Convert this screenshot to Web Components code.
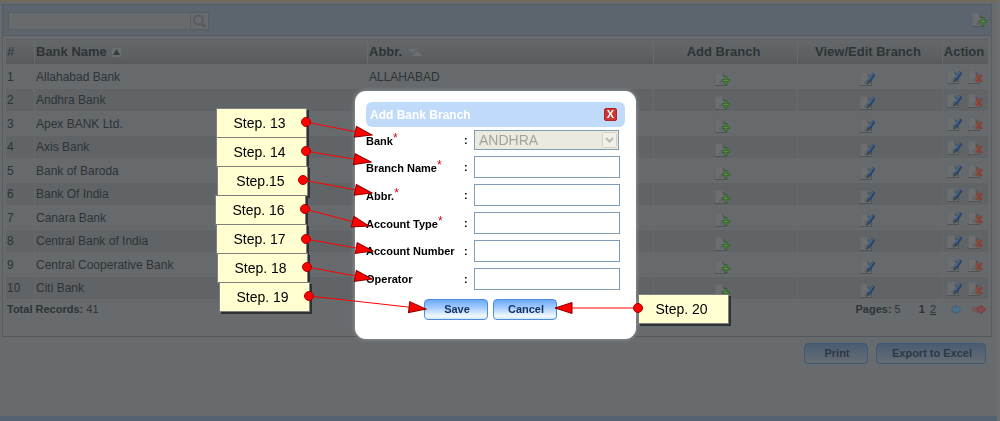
<!DOCTYPE html>
<html lang="en">
<head>
<meta charset="utf-8">
<title>Bank Branches</title>
<style>
html, body { margin: 0; height: 100%; }
body { font-family: "Liberation Sans", Arial, sans-serif; font-size: 12px; background: #676b6e; color: #2e3336; overflow: hidden; }
</style>
</head>
<body>
<bank-page></bank-page>
<modal-layer>
  <branch-dialog></branch-dialog>
</modal-layer>

<script>
const make = (name, html, setup) => {
  const t = document.createElement('template');
  t.innerHTML = html;
  customElements.define(name, class extends HTMLElement {
    connectedCallback() {
      if (this.shadowRoot) return;
      this.attachShadow({ mode: 'open' }).append(t.content.cloneNode(true));
      if (setup) setup.call(this, this.shadowRoot);
    }
  });
};

const doc = '<path d="M1 1h7l3 4v8H1z" fill="#6b6f72"/><path d="M.5 13V.5H8" fill="none" stroke="#64686b"/><path d="M0 13.500h12M11.500 13V5" fill="none" stroke="#505456"/><path d="M7 1l5 4H8z" fill="#54585b"/><path d="M4 10l3-3 4 2v3H4z" fill="#626669"/>';
const shapes = {
  add: doc + '<path d="M11 4v9M7 8.500h8" stroke="#38622f" stroke-width="3"/><path d="M11 5v7M8 8.500h6" stroke="#5a8a40"/>',
  edit: doc + '<path d="M8.500 10L14 2" stroke="#2c4468" stroke-width="3.500"/><path d="M8.500 8.500L13 2" stroke="#4a7fa3"/><path d="M6 13l1-4 3 2z" fill="#3f464c"/>',
  del: doc + '<path d="M8 5l6 7M14 5l-6 7" stroke="#8a4237" stroke-width="2.500"/>',
  search: '<circle cx="6.500" cy="6" r="4.500" fill="none" stroke="#585c5f" stroke-width="2"/><path d="M9.500 9.500l3.500 3.500" stroke="#585c5f" stroke-width="3"/>',
  next: '<path d="M3 5h4V3l5 4.500-5 4.500v-2H3z" fill="#4a7189" stroke="#3e5f7b"/>',
  last: '<path d="M1 5v5M3 5v5" stroke="#83494b"/><path d="M5 5h4V3l5 4.500-5 4.500v-2H5z" fill="#84494b" stroke="#743f41"/>'
};
make('ui-icon', `<style>:host{display:inline-block;width:15px;height:15px;vertical-align:top}svg{display:block}</style><svg width="15" height="15" viewBox="0 0 15 15"></svg>`,
  function (r) { r.querySelector('svg').innerHTML = shapes[this.getAttribute('kind')]; });

make('glass-button', `<style>
:host{display:inline-block}
button{box-sizing:border-box;width:100%;height:21px;padding:0 2px 0 4px;margin:0;display:block;white-space:nowrap;font:bold 11px/19px "Liberation Sans",Arial,sans-serif;color:#14305e;border:1px solid #4a8edb;border-radius:4px;background:linear-gradient(#69aafb,#a3cbfd 40%,#f4f9ff 85%,#d5e8ff)}
:host([dim]) button{color:#2c3846;border-color:#3d5a78;background:linear-gradient(#485c71,#566474 45%,#666b71)}
</style><button type="button"><slot></slot></button>`);

make('search-box', `<style>
:host{display:flex;width:201px;height:18px}
input{box-sizing:border-box;flex:1;min-width:0;margin:0;padding:0 3px;border:1px solid #595d60;background:#676b6e;color:#2e3336;font:12px "Liberation Sans",Arial,sans-serif}
button{box-sizing:border-box;width:18px;padding:1px;border:1px solid #595d60;border-left:0;background:#676b6e}
</style><input type="text" aria-label="Search banks"><button type="button" aria-label="Search"><ui-icon kind="search"></ui-icon></button>`);

make('bank-table', `<style>
:host{display:block}
table{width:100%;table-layout:fixed;border-collapse:separate;border-spacing:1px}
th,td{padding:0 1px;text-align:left;font-weight:normal;overflow:hidden;white-space:nowrap}
th{height:24px;font:bold 13px/24px "Liberation Sans",Arial,sans-serif;background:linear-gradient(#63676a,#5c6062 75%,#57595b);border-top:1px solid #5c6063}
th:first-child{font-weight:normal}
td{height:23px;line-height:22px;background:#666a6d}
tr:nth-child(even) td{height:22px;background:#606467}
th.c{text-align:center;padding-right:5px}
th.c:last-child{padding:0 3px 0 0}
td ui-icon{margin:6px auto 0;display:block}
td.i{padding-right:7px}
.act div{display:flex;gap:6px;padding-right:2px;justify-content:center}
.act ui-icon{margin:2px 0 0}
th svg{margin-left:5px;vertical-align:-1px}
</style>
<table><colgroup><col style="width:28px"><col><col style="width:285px"><col style="width:143px"><col style="width:144px"><col style="width:45px"></colgroup>
<thead><tr><th scope="col">#</th><th scope="col">Bank Name<svg width="9" height="9"><path d="M0 0h9v9H0z" fill="#6a6e70"/><path d="M1 7l3.500-6L8 7z" fill="#373c3f"/></svg></th><th scope="col">Abbr.<svg width="16" height="9"><path d="M1 1h9L5 5z" fill="#6c7072"/><path d="M5 8l5-5 5 5z" fill="#6c7072"/></svg></th><th class="c" scope="col">Add Branch</th><th class="c" scope="col">View/Edit Branch</th><th class="c" scope="col">Action</th></tr></thead><tbody></tbody></table>`,
function (r) {
  const banks = ['Allahabad Bank', 'Andhra Bank', 'Apex BANK Ltd.', 'Axis Bank', 'Bank of Baroda', 'Bank Of India', 'Canara Bank', 'Central Bank of India', 'Central Cooperative Bank', 'Citi Bank'];
  r.querySelector('tbody').innerHTML = banks.map((b, i) => `<tr><td>${i + 1}</td><td>${b}</td><td>${i ? '' : 'ALLAHABAD'}</td><td class="i"><ui-icon kind="add"></ui-icon></td><td class="i"><ui-icon kind="edit"></ui-icon></td><td class="act"><div><ui-icon kind="edit"></ui-icon><ui-icon kind="del"></ui-icon></div></td></tr>`).join('');
});

make('table-pager', `<style>
:host{display:flex;align-items:center;height:18px;padding:0 4px;font-size:11px}
.p{margin-left:auto}
nav{display:flex;align-items:center;margin-left:18px}
a{color:inherit}
nav a{margin-left:5px}nav .n{margin-left:13px}nav .l{margin-left:8px}
</style><span><b>Total Records:</b> 41</span><span class="p"><b>Pages:</b> 5</span>
<nav aria-label="Pages"><b>1</b><a href="#2">2</a><a class="n" href="#2" aria-label="Next page"><ui-icon kind="next"></ui-icon></a><a class="l" href="#5" aria-label="Last page"><ui-icon kind="last"></ui-icon></a></nav>`);

make('bank-page', `<style>
:host{display:flex;flex-direction:column;min-height:100vh;box-sizing:border-box;border-right:3px solid #6b6f71}
.top{height:1px;background:#79694a}
.panel{margin:3px 5px 0 2px;border:1px solid #595d60;border-bottom-color:#55595c;padding-bottom:18px}
.bar{display:flex;align-items:center;justify-content:space-between;height:30px;padding:0 4px 0 5px;background:#5c646e;border-bottom:1px solid #565b61}
.bar search-box{margin-top:2px}
bank-table{margin:2px 2px 0}
.buttons{display:flex;justify-content:flex-end;gap:8px;margin:6px 11px 0 0}
.print{width:64px}.export{width:110px}
.bottom{height:5px;margin-top:auto;background:#536170}
</style>
<div class="top"></div>
<div class="panel"><div class="bar"><search-box></search-box><ui-icon kind="add"></ui-icon></div><bank-table></bank-table><table-pager></table-pager></div>
<div class="buttons"><glass-button dim class="print">Print</glass-button><glass-button dim class="export">Export to Excel</glass-button></div>
<div class="bottom"></div>`);

make('modal-layer', `<style>:host{position:fixed;inset:0;display:flex;justify-content:center;align-items:flex-start;padding:91px 9px 0 0}</style><slot></slot>`);

make('form-row', `<style>
:host{display:grid;grid-template-columns:98px 10px 146px;align-items:center;color:#000;font-size:11px}
label,.colon{font-weight:bold;white-space:nowrap}
label sup{color:#d00000;font:12px/8px "Liberation Sans",Arial,sans-serif;vertical-align:3px}
input{box-sizing:border-box;width:100%;height:22px;margin:0;padding:0 4px;border:1px solid #7f9db9;background:#fff;font:14px "Liberation Sans",Arial,sans-serif}
.sel{display:grid;height:20px;width:145px}
.sel>*{grid-area:1/1}
select{box-sizing:border-box;width:100%;height:20px;appearance:none;margin:0;padding:0 4px;border:1px solid #7f9db9;border-radius:0;background:#ebeae1;color:#a6a396;opacity:1;font:14px "Liberation Sans",Arial,sans-serif}
svg{justify-self:end;align-self:center;margin-right:2px;pointer-events:none}
</style><label for="f"></label><span class="colon">:</span>`,
function (r) {
  const l = r.querySelector('label');
  l.textContent = this.getAttribute('label');
  if (this.hasAttribute('required')) l.insertAdjacentHTML('beforeend', '<sup>*</sup>');
  const v = this.getAttribute('value');
  r.querySelector('.colon').insertAdjacentHTML('afterend', v
    ? `<div class="sel"><select id="f" disabled><option>${v}</option></select><svg width="15" height="16"><rect x=".5" y=".5" width="14" height="15" rx="1" fill="#f1f0e8" stroke="#d4d2c4"/><path d="M4 6l3.500 3.500L11 6" fill="none" stroke="#bdbbad" stroke-width="2"/></svg></div>`
    : '<input id="f" type="text">');
});

make('step-note', `<style>
:host{position:absolute;box-sizing:border-box;width:91px;height:30px;border:1px solid #808080;background:#ffffd2;color:#000;font-size:14px;line-height:28px;text-align:center;padding-right:4px;box-shadow:2px 2px 0 #2f3234}
</style><slot></slot>`);

make('step-notes', `<style>:host{position:absolute;left:0;top:0}svg{position:absolute;left:0;top:0;overflow:visible;pointer-events:none}</style>
<div></div><svg width="1" height="1"><defs><marker id="h" markerUnits="userSpaceOnUse" markerWidth="20" markerHeight="14" refX="18" refY="7" orient="auto"><path d="M1 1.500L18 7 1 12.500z" fill="#f00" stroke="#8c0000"/></marker></defs></svg>`,
function (r) {
  // note text, note x/y, pin x/y, arrow tip x/y; all measured from the dialog's corner
  const notes = [
    ['Step. 13', -139, 17, -49, 31, 17, 44], ['Step. 14', -139, 46, -49, 60, 16, 71],
    ['Step.15', -138, 75, -52, 89, 17, 102], ['Step. 16', -140, 104, -50, 118, 14, 135],
    ['Step. 17', -139, 133, -49, 148, 18, 160], ['Step. 18', -138, 162, -48, 176, 17, 188],
    ['Step. 19', -136, 191, -46, 205, 71, 218], ['Step. 20', 283, 203, 283, 217, 200, 217]];
  r.querySelector('div').innerHTML = notes.map(n => `<step-note style="left:${n[1]}px;top:${n[2]}px">${n[0]}</step-note>`).join('');
  r.querySelector('svg').insertAdjacentHTML('beforeend', notes.map(n => `<path d="M${n[3]} ${n[4]}L${n[5]} ${n[6]}" stroke="#f00" marker-end="url(#h)"/><circle cx="${n[3]}" cy="${n[4]}" r="4.500" fill="#f00" stroke="#b00000"/>`).join(''));
});

make('branch-dialog', `<style>
:host{position:relative;display:block;box-sizing:border-box;width:281px;padding:11px 11px 19px;border-radius:11px;background:#fff;box-shadow:0 0 4px #a0a3a5}
header{display:flex;align-items:center;justify-content:space-between;height:25px;padding:0 8px 0 4px;border-radius:6px;background:#c0dbfa}
h2{margin:0;font-size:12px;line-height:16px;color:#fff}
.x{width:13px;height:13px;padding:0;border:1px solid #b02424;border-radius:2px;background:#cf3535;color:#fff;font:bold 11px/11px "Liberation Sans",Arial,sans-serif}
form{display:flex;flex-direction:column;gap:6px;padding:3px 0 0}
.b{display:flex;justify-content:center;gap:5px;margin-top:3px;padding-right:10px}
.b glass-button{width:64px}
</style>
<section role="dialog" aria-label="Add Bank Branch">
<header><h2>Add Bank Branch</h2><button class="x" type="button" aria-label="Close">X</button></header>
<form>
<form-row label="Bank" required value="ANDHRA"></form-row>
<form-row label="Branch Name" required></form-row>
<form-row label="Abbr." required></form-row>
<form-row label="Account Type" required></form-row>
<form-row label="Account Number"></form-row>
<form-row label="Operator"></form-row>
<div class="b"><glass-button>Save</glass-button><glass-button>Cancel</glass-button></div>
</form></section>
<step-notes></step-notes>`);
</script>
</body>
</html>
